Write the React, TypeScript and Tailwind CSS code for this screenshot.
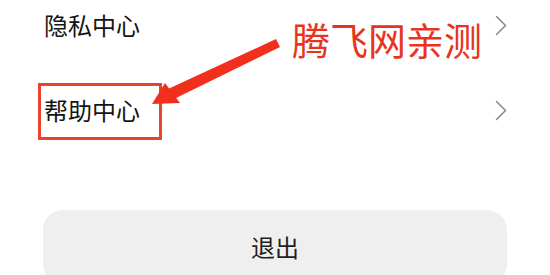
import React from "react";

const Chevron = () => (
  <svg width="12" height="21" viewBox="0 0 12 21" fill="none">
    <polyline points="1.5,1.5 10.5,10.5 1.5,19.5" stroke="#8c8c8c" strokeWidth="1.6" strokeLinecap="round" strokeLinejoin="round" />
  </svg>
);

export default function App() {
  return (
    <div
      className="relative w-[550px] h-[275px] overflow-hidden bg-white"
      style={{ fontFamily: '"Noto Sans CJK SC", "Noto Sans", sans-serif' }}
    >
      <div className="flex flex-col">
        <div className="flex h-[50px] items-center justify-between pl-[44px] pr-[43px]">
          <span className="text-[24px] leading-none text-[#141414]">隐私中心</span>
          <Chevron />
        </div>
        <div className="flex h-[120px] items-center justify-between pl-[44px] pr-[43px]">
          <span className="text-[24px] leading-none text-[#141414]">帮助中心</span>
          <Chevron />
        </div>
        <div className="mt-[40px] px-[43px]">
          <div className="flex h-[74px] items-center justify-center rounded-[20px] bg-[#efefef]">
            <span className="text-[24px] leading-none text-[#1f1f1f]">退出</span>
          </div>
        </div>
      </div>

      {/* annotation overlay */}
      <div className="absolute left-[38px] top-[83px] h-[57px] w-[124px] border-[3px] border-[#e8432c]" />
      <svg className="absolute left-0 top-0" width="550" height="275" viewBox="0 0 550 275">
        <polygon points="276,39 280,47 174,99 168,89" fill="#f0301c" />
        <polygon points="152,104 165,83 180,103" fill="#f0301c" />
      </svg>
      <div className="absolute left-[292px] top-[15px] text-[38px] leading-[48px] text-[#e8341c]">
        腾飞网亲测
      </div>
    </div>
  );
}
